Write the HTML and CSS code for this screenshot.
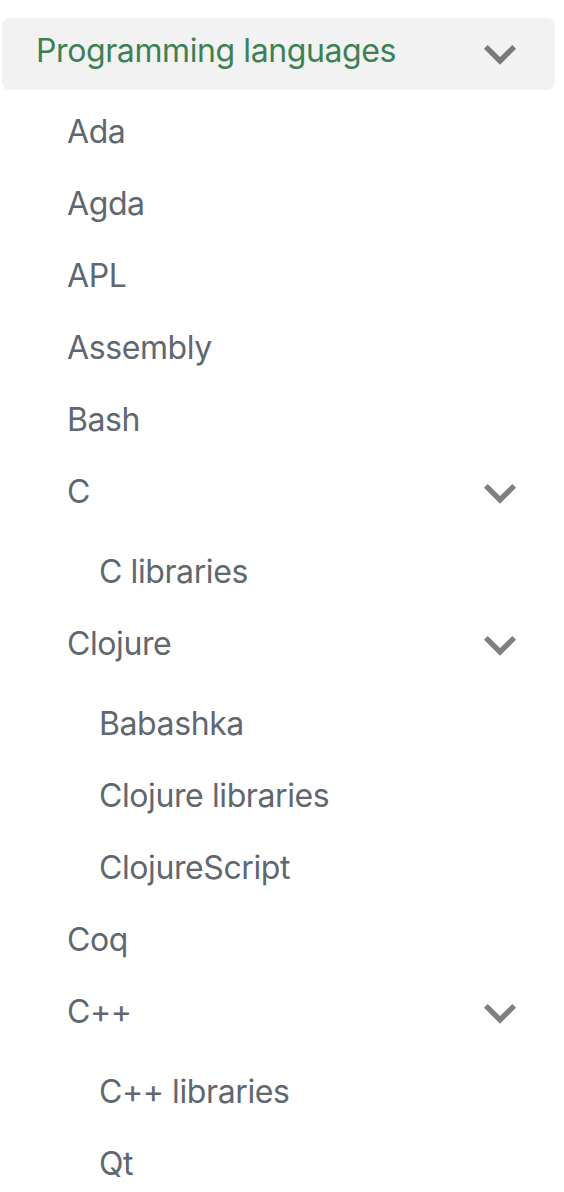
FILE: index.html
```html
<!DOCTYPE html>
<html lang="en">
<head>
<meta charset="utf-8">
<title>Programming languages</title>
<link rel="stylesheet" href="styles.css">
</head>
<body>
<nav class="sidebar">
  <div class="category-header">
    <span class="category-title">Programming languages</span>
    <span class="caret caret-header"><svg viewBox="4.5 4.5 15 15" width="40" height="40"><path d="M16.59 8.59L12 13.17 7.41 8.59 6 10l6 6 6-6z"/></svg></span>
  </div>
  <ul class="menu">
    <li class="item"><a class="link">Ada</a></li>
    <li class="item"><a class="link">Agda</a></li>
    <li class="item"><a class="link">APL</a></li>
    <li class="item"><a class="link">Assembly</a></li>
    <li class="item"><a class="link">Bash</a></li>
    <li class="item">
      <div class="link collapsible"><span>C</span><span class="caret"><svg viewBox="4.5 4.5 15 15" width="40" height="40"><path d="M16.59 8.59L12 13.17 7.41 8.59 6 10l6 6 6-6z"/></svg></span></div>
      <ul class="menu sub">
        <li class="item"><a class="link">C libraries</a></li>
      </ul>
    </li>
    <li class="item">
      <div class="link collapsible"><span>Clojure</span><span class="caret"><svg viewBox="4.5 4.5 15 15" width="40" height="40"><path d="M16.59 8.59L12 13.17 7.41 8.59 6 10l6 6 6-6z"/></svg></span></div>
      <ul class="menu sub">
        <li class="item"><a class="link">Babashka</a></li>
        <li class="item"><a class="link">Clojure libraries</a></li>
        <li class="item"><a class="link">ClojureScript</a></li>
      </ul>
    </li>
    <li class="item"><a class="link">Coq</a></li>
    <li class="item">
      <div class="link collapsible"><span>C++</span><span class="caret"><svg viewBox="4.5 4.5 15 15" width="40" height="40"><path d="M16.59 8.59L12 13.17 7.41 8.59 6 10l6 6 6-6z"/></svg></span></div>
      <ul class="menu sub">
        <li class="item"><a class="link">C++ libraries</a></li>
        <li class="item"><a class="link">Qt</a></li>
      </ul>
    </li>
  </ul>
</nav>
</body>
</html>
```
FILE: styles.css
```css
html, body {
  margin: 0;
  padding: 0;
  background: #ffffff;
}

body {
  font-family: Inter, "Noto Sans", Roboto, sans-serif;
  font-size: 32px;
  line-height: 40px;
  letter-spacing: -0.4px;
  color: #606770;
  overflow: hidden;
}

.sidebar {
  padding: 18px 9px 0 2px;
}

.category-header {
  display: flex;
  align-items: center;
  justify-content: space-between;
  height: 72px;
  background: #f2f2f2;
  border-radius: 8px;
  padding-left: 34px;
}

.category-title {
  color: #3d8054;
  padding-bottom: 6px;
}

.caret {
  display: flex;
  width: 40px;
  height: 40px;
  margin-right: 35px;
}

.caret svg {
  display: block;
  fill: rgba(0, 0, 0, 0.5);
}

.collapsible .caret {
  margin-top: 3px;
}

.menu {
  list-style: none;
  margin: 0;
  padding: 0 0 0 65px;
}

.menu.sub {
  padding-top: 8px;
  padding-left: 32px;
}

.item {
  margin-top: 8px;
}

.link {
  box-sizing: border-box;
  display: flex;
  align-items: center;
  justify-content: space-between;
  height: 64px;
  padding-top: 3px;
  color: #606770;
  text-decoration: none;
}
```
